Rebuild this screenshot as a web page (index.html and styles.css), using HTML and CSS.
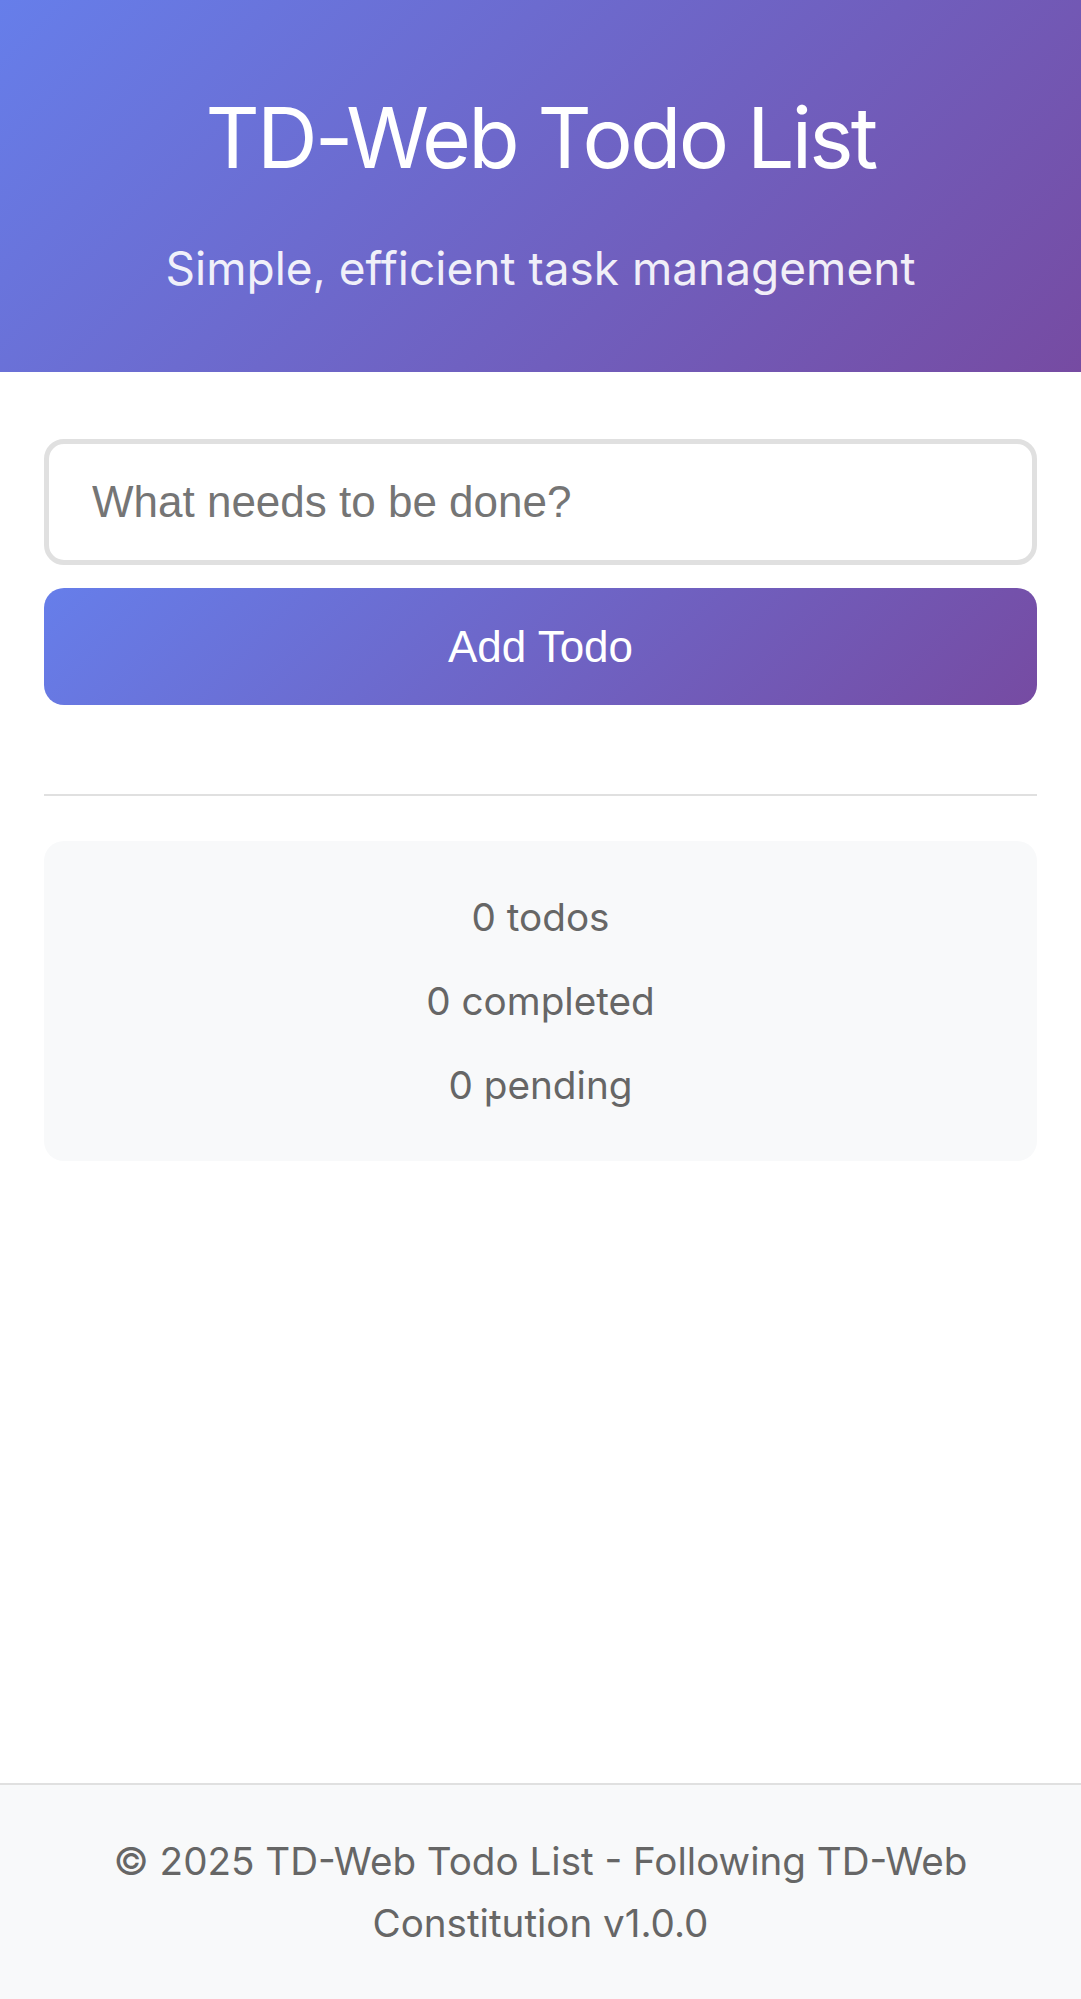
FILE: index.html
```html
<!DOCTYPE html>
<html lang="en">
<head>
<meta charset="utf-8">
<title>TD-Web Todo List</title>
<link rel="stylesheet" href="styles.css">
</head>
<body>
  <header class="app-header">
    <h1 class="app-title">TD-Web Todo List</h1>
    <p class="app-subtitle">Simple, efficient task management</p>
  </header>
  <main class="app-main">
    <form class="todo-form">
      <input class="todo-input" type="text" placeholder="What needs to be done?">
      <button class="todo-button" type="button">Add Todo</button>
    </form>
    <hr class="divider">
    <section class="stats">
      <span class="stat">0 todos</span>
      <span class="stat">0 completed</span>
      <span class="stat">0 pending</span>
    </section>
  </main>
  <footer class="app-footer">
    <p class="footer-text">© 2025 TD-Web Todo List - Following TD-Web Constitution v1.0.0</p>
  </footer>
</body>
</html>
```
FILE: styles.css
```css
* { box-sizing: border-box; }

html, body {
  margin: 0;
  padding: 0;
}

body {
  font-family: Inter, "Noto Sans", sans-serif;
  color: #333;
  background: #fff;
  min-height: 1999px;
  display: flex;
  flex-direction: column;
}

.app-header {
  background: linear-gradient(135deg, #667eea 0%, #764ba2 100%);
  color: #fff;
  text-align: center;
  padding: 84px 45px 77px;
}

.app-title {
  margin: 0 0 49px;
  font-size: 84px;
  line-height: 108px;
  font-weight: 400;
  letter-spacing: -2.8px;
}

.app-subtitle {
  margin: 0;
  font-size: 46px;
  line-height: 54px;
  font-weight: 400;
  opacity: 0.9;
}

.app-main {
  flex: 1;
  padding: 67px 44px;
}

.todo-form {
  display: flex;
  flex-direction: column;
  gap: 23px;
}

.todo-input {
  height: 126px;
  border: 5px solid #e0e0e0;
  border-radius: 20px;
  padding: 0 43px;
  font-family: "Liberation Sans", Arial, sans-serif;
  font-size: 44px;
  color: #333;
  background: #fff;
  outline: none;
}

.todo-input::placeholder {
  color: #757575;
}

.todo-button {
  height: 117px;
  border: none;
  border-radius: 20px;
  background: linear-gradient(135deg, #667eea 0%, #764ba2 100%);
  color: #fff;
  font-family: "Liberation Sans", Arial, sans-serif;
  font-size: 44px;
}

.divider {
  margin: 89px 0 0;
  border: none;
  border-top: 2px solid #e0e0e0;
  height: 0;
}

.stats {
  margin-top: 45px;
  background: #f8f9fa;
  border-radius: 20px;
  padding: 34px 20px;
  display: flex;
  flex-direction: column;
  align-items: center;
}

.stat {
  font-size: 38.7px;
  line-height: 84px;
  color: #666;
}

.app-footer {
  background: #f8f9fa;
  border-top: 2px solid #e0e0e0;
  padding: 45px 45px;
  text-align: center;
}

.footer-text {
  margin: 0;
  font-size: 38.6px;
  line-height: 62px;
  color: #666;
}
```
